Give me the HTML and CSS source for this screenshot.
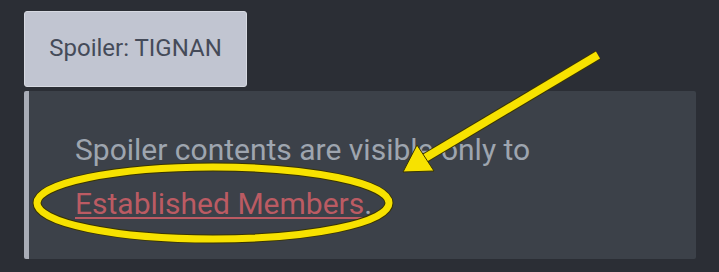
FILE: index.html
```html
<!DOCTYPE html>
<html>
<head>
<meta charset="utf-8">
<link rel="stylesheet" href="styles.css">
</head>
<body>
<div class="page">
  <button class="spoiler-btn">Spoiler: TIGNAN</button>
  <div class="spoiler-box">
    <p class="msg">Spoiler contents are visible only to<br><a class="link" href="#">Established Members</a>.</p>
  </div>
  <svg class="annot" width="719" height="272" viewBox="0 0 719 272">
    <ellipse cx="213" cy="203" rx="176" ry="36" fill="none" stroke="#3a3500" stroke-width="9"/>
    <ellipse cx="213" cy="203" rx="176" ry="36" fill="none" stroke="#f7e200" stroke-width="7"/>
    <line x1="598" y1="55" x2="425" y2="158" stroke="#3a3500" stroke-width="10"/>
    <line x1="598" y1="55" x2="425" y2="158" stroke="#f7e200" stroke-width="8"/>
    <polygon points="403,172 434,171 417,145" fill="#f7e200" stroke="#3a3500" stroke-width="1"/>
  </svg>
</div>
</body>
</html>
```
FILE: styles.css
```css
html, body {
  margin: 0;
  padding: 0;
  background: #2b2e35;
}
.page {
  position: relative;
  width: 719px;
  height: 272px;
  padding: 11px 0 0 24px;
  box-sizing: border-box;
  font-family: Roboto, "Liberation Sans", sans-serif;
}
.spoiler-btn {
  display: block;
  width: 223px;
  height: 76px;
  margin: 0;
  padding: 0 0 2px 0;
  background: #c1c5d1;
  border: 1px solid #d6d9e1;
  border-radius: 3px;
  color: #454b59;
  font-family: Roboto, "Liberation Sans", sans-serif;
  font-size: 24px;
  text-align: center;
}
.spoiler-box {
  margin-top: 4px;
  width: 672px;
  height: 168px;
  box-sizing: border-box;
  background: #3c4149;
  border-left: 5px solid #a9adb7;
  border-radius: 2px;
  padding: 32px 0 0 46px;
}
.msg {
  margin: 0;
  font-size: 30px;
  line-height: 54px;
  color: #9ea5af;
}
.link {
  color: #bb5b63;
  text-decoration: underline;
  text-underline-offset: 3px;
  text-decoration-thickness: 2px;
}
.annot {
  position: absolute;
  left: 0;
  top: 0;
}
```
